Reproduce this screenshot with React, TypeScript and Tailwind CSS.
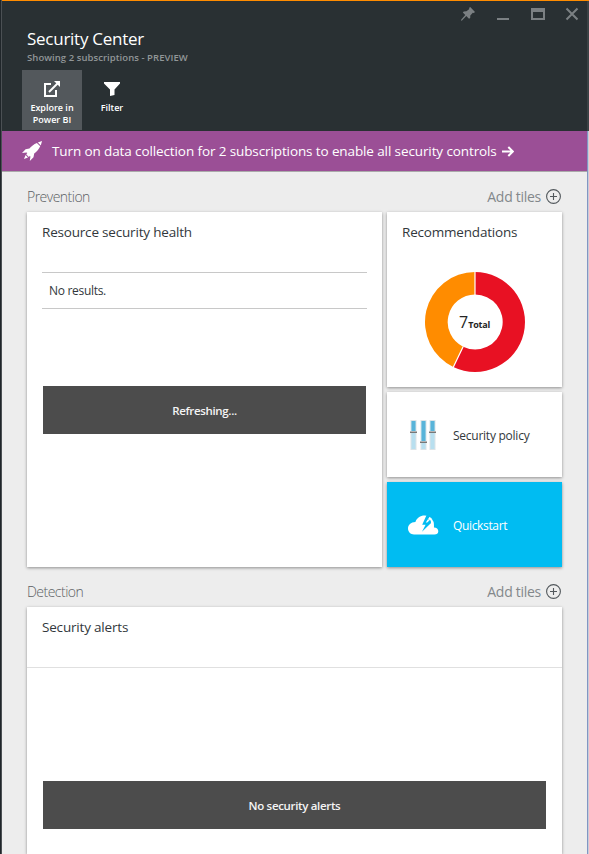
import React from "react";

function Rocket() {
  return (
    <svg width="20" height="20" viewBox="0 0 20 20" fill="#fff" className="block shrink-0">
      <path d="M20 0 L15.8 1.4 L18.8 4.4 Z" />
      <path d="M14.9 2 C11.8 3.2 9.2 5.5 7.4 7.6 L3.6 8.2 L0 12 L4.4 11.4 L5.4 12 L4.2 13.2 L6.8 15.9 L8 14.8 L8.4 15.8 L7.8 20 L11.5 16.2 L12.2 12.6 C14.8 10.7 17 8.2 18.2 5.3 Z" />
      <path d="M3.6 14 L2 18 L6 16.4 Z" />
    </svg>
  );
}

function Explore() {
  return (
    <svg width="18" height="18" viewBox="0 0 18 18" fill="none" stroke="#fff" strokeWidth="2" className="block">
      <path d="M8 4 H2 V16 H13 V10" />
      <path d="M6 12 L15 3" strokeWidth="2" />
      <path d="M11 1 H17 V7 Z" fill="#fff" stroke="none" />
    </svg>
  );
}

function Sliders() {
  const bars = [
    { x: 0, y: 12 },
    { x: 10, y: 22 },
    { x: 19, y: 12 },
  ];
  return (
    <svg width="26" height="30" viewBox="0 0 26 30" className="block shrink-0">
      {bars.map((b) => (
        <g key={b.x}>
          <rect x={b.x + 0.5} y="0" width="6" height="30" fill="#dce3e6" />
          <rect x={b.x + 1.5} y="1" width="4" height="28" fill="#b8dfef" />
          <rect x={b.x + 1.5} y="1" width="4" height={b.y - 1} fill="#59b4d9" />
          <rect x={b.x} y={b.y - 1} width="7" height="1" fill="#b5b5b5" />
          <rect x={b.x} y={b.y} width="7" height="1" fill="#777" />
        </g>
      ))}
    </svg>
  );
}

function Cloud() {
  return (
    <svg width="31" height="20" viewBox="0 0 31 20" className="block shrink-0">
      <path
        fill="#fff"
        d="M6 19.5 C2.5 19.5 0 17 0 13.6 C0 10 2.8 7 7.4 7 C8.8 3 12.3 0.5 16.5 0.5 C20 0.7 23 2 24.6 5 C25.8 7.2 25.7 9.5 26 12.5 C28.5 12.6 30.3 14 30.3 16.2 C30.3 18.3 28.7 19.5 26.5 19.5 Z"
      />
      <path fill="#00bcf2" d="M18.6 0 L14.2 9.8 L17.6 9.8 L14 16.8 L23.6 7.6 L25 8 L24.4 3.2 L20 4.8 L21.4 5.6 L19.2 7.6 L17.8 7.6 L22.8 0 Z" />
      <path fill="#fff" d="M20.4 4.9 L23 2.8 L25.4 6.8 L26 12.5 L23 8.4 L22.8 5.6 Z" />
    </svg>
  );
}

function AddTiles() {
  return (
    <div className="flex items-center">
      <span className="mr-[5px] text-[14px] leading-5 tracking-[-0.28px] text-[#83888b]">Add tiles</span>
      <svg width="16" height="16" viewBox="0 0 16 16" fill="none" stroke="#52585c" className="block">
        <circle cx="7.5" cy="7.5" r="6.9" strokeWidth="1.1" />
        <path d="M4 7.5 H11 M7.5 4 V11" strokeWidth="1.1" />
      </svg>
    </div>
  );
}

function SectionHeader({ title }: { title: string }) {
  return (
    <div className="flex h-10 items-center justify-between pt-[10px]">
      <h2 className="text-[14px] font-light leading-5 tracking-[-0.52px] text-[#5c6164]">{title}</h2>
      <AddTiles />
    </div>
  );
}

function Donut() {
  return (
    <div className="relative mx-auto mt-[29px] h-[102px] w-[102px]">
      <svg width="102" height="102" viewBox="0 0 102 102" className="block">
        <path d="M51 1 A50 50 0 1 1 29.3 96.05 L39.1 75.7 A27.5 27.5 0 1 0 51 23.5 Z" fill="#e81123" />
        <path d="M51 1 A50 50 0 0 0 29.3 96.05 L39.1 75.7 A27.5 27.5 0 0 1 51 23.5 Z" fill="#ff8c00" />
        <path d="M51 0 V24 M39.1 75.7 L28.9 97" stroke="#fff" strokeWidth="1.2" />
      </svg>
      <div className="absolute inset-0 flex items-baseline justify-center pt-[39px] text-[#252525]">
        <span className="text-[16px] leading-6">7</span>
        <span className="text-[9px] font-bold leading-6 tracking-[-0.2px]">Total</span>
      </div>
    </div>
  );
}

const tile = "bg-white shadow-[0_1px_3px_rgba(0,0,0,0.4)]";
const tileTitle = "text-[13.5px] leading-5 tracking-[-0.19px]";
const message =
  "flex h-12 items-center justify-center bg-[#4c4c4c] pt-px text-[11.5px] font-semibold tracking-[-0.33px] text-[#f4f4f4]";

export default function App() {
  return (
    <div className="flex h-[854px] w-[589px] overflow-hidden bg-[#ededed] font-['Open_Sans',sans-serif]">
      <div className="w-[2px] shrink-0 border-r border-[#4b5054] bg-[#20262a]" />
      <div className="flex w-[585px] shrink-0 flex-col">
        <header className="h-[131px] border-t border-[#ff8c00] bg-[#293033]">
          <div className="flex h-[26px] items-center justify-end pr-2">
            <svg width="118" height="16" viewBox="0 0 118 16" fill="none" stroke="#7b8083" className="block">
              <path d="M9.2 1 L14 6 L12.8 7 L11.8 6.7 L9.3 9.4 L9.2 12 L8 12.8 L5.3 10 L1 14.5 L0 14.7 L0.3 13.5 L4.3 9 L1.8 6.5 L2.8 5.4 L5.4 5.3 L8.4 3 L8 2 Z" fill="#7b8083" stroke="none" />
              <path d="M36 13 H48" strokeWidth="2" />
              <path d="M70 2 H84 V14 H70 Z M72 6 V12 H82 V6 Z" fill="#7b8083" fillRule="evenodd" stroke="none" />
              <path d="M105.5 2.5 L116.5 13.5 M116.5 2.5 L105.5 13.5" strokeWidth="2" />
            </svg>
          </div>
          <div className="pl-[25px]">
            <h1 className="text-[17px] leading-6 tracking-[-0.26px] text-white">Security Center</h1>
            <p className="text-[9.5px] font-semibold leading-[13px] tracking-[0.06px] text-[#919698]">Showing 2 subscriptions - PREVIEW</p>
          </div>
          <div className="mt-[6px] flex pl-5 text-center text-[9px] font-semibold leading-3 text-white">
            <div className="flex h-[60px] w-[60px] flex-col items-center bg-[#53585c] pt-[10px]">
              <Explore />
              <span className="mt-[4px]">Explore in<br />Power BI</span>
            </div>
            <div className="flex h-[60px] w-[60px] flex-col items-center pt-[10px]">
              <svg width="18" height="18" viewBox="0 0 18 18" className="block">
                <path d="M1 2 H17 V3.5 L11.5 9.5 V15 L7 16 V9.5 L1 3.5 Z" fill="#fff" />
              </svg>
              <span className="mt-[4px]">Filter</span>
            </div>
          </div>
        </header>
        <div className="flex h-[41px] items-center border-b border-[#aaa] bg-[#9b4f96] pl-5 text-white">
          <Rocket />
          <span className="ml-[10px] whitespace-nowrap text-[13.5px] leading-5 tracking-[-0.11px]">Turn on data collection for 2 subscriptions to enable all security controls</span>
          <svg width="12" height="11" viewBox="0 0 12 11" fill="none" stroke="#fff" strokeWidth="2" className="ml-[5px] block shrink-0">
            <path d="M0 5.5 H10.5 M6.3 1 L10.8 5.5 L6.3 10" />
          </svg>
        </div>
        <main className="flex flex-1 flex-col px-[25px] text-[#32383c]">
          <SectionHeader title="Prevention" />
          <div className="flex gap-[5px]">
            <section className={tile + " h-[355px] w-[355px] px-[15px] pt-[10px]"}>
              <h3 className={tileTitle}>Resource security health</h3>
              <div className="mt-[30px] h-[37px] border-y border-[#c8c8c8] pl-[7px] text-[12px] leading-[36px] tracking-[-0.3px]">No results.</div>
              <div className={message + " ml-px mt-[77px] w-[323px]"}>Refreshing...</div>
            </section>
            <div className="flex w-[175px] flex-col">
              <section className={tile + " h-[175px] pt-[10px]"}>
                <h3 className={tileTitle + " pl-[15px]"}>Recommendations</h3>
                <Donut />
              </section>
              <section className={tile + " mt-[5px] flex h-[85px] items-center pl-[23px]"}>
                <Sliders />
                <span className="ml-[17px] pt-[2px] text-[12px] tracking-[-0.25px]">Security policy</span>
              </section>
              <section className="mt-[5px] flex h-[85px] items-center bg-[#00bcf2] pl-[21px] text-white shadow-[0_1px_3px_rgba(0,0,0,0.4)]">
                <Cloud />
                <span className="ml-[14px] pt-[2px] text-[12px] tracking-[-0.35px]">Quickstart</span>
              </section>
            </div>
          </div>
          <SectionHeader title="Detection" />
          <section className={tile + " flex-1"}>
            <h3 className={tileTitle + " h-[61px] border-b border-[#e0e0e0] pl-[15px] pt-[10px]"}>Security alerts</h3>
            <div className={message + " ml-4 mt-[113px] w-[503px]"}>No security alerts</div>
          </section>
        </main>
      </div>
      <div className="flex w-[2px] shrink-0 flex-col">
        <div className="h-[131px] border-t border-[#ff8c00] bg-[#3b4245]" />
        <div className="flex-1 border-r border-[#c9ced8] bg-[#8296c4]" />
      </div>
    </div>
  );
}
